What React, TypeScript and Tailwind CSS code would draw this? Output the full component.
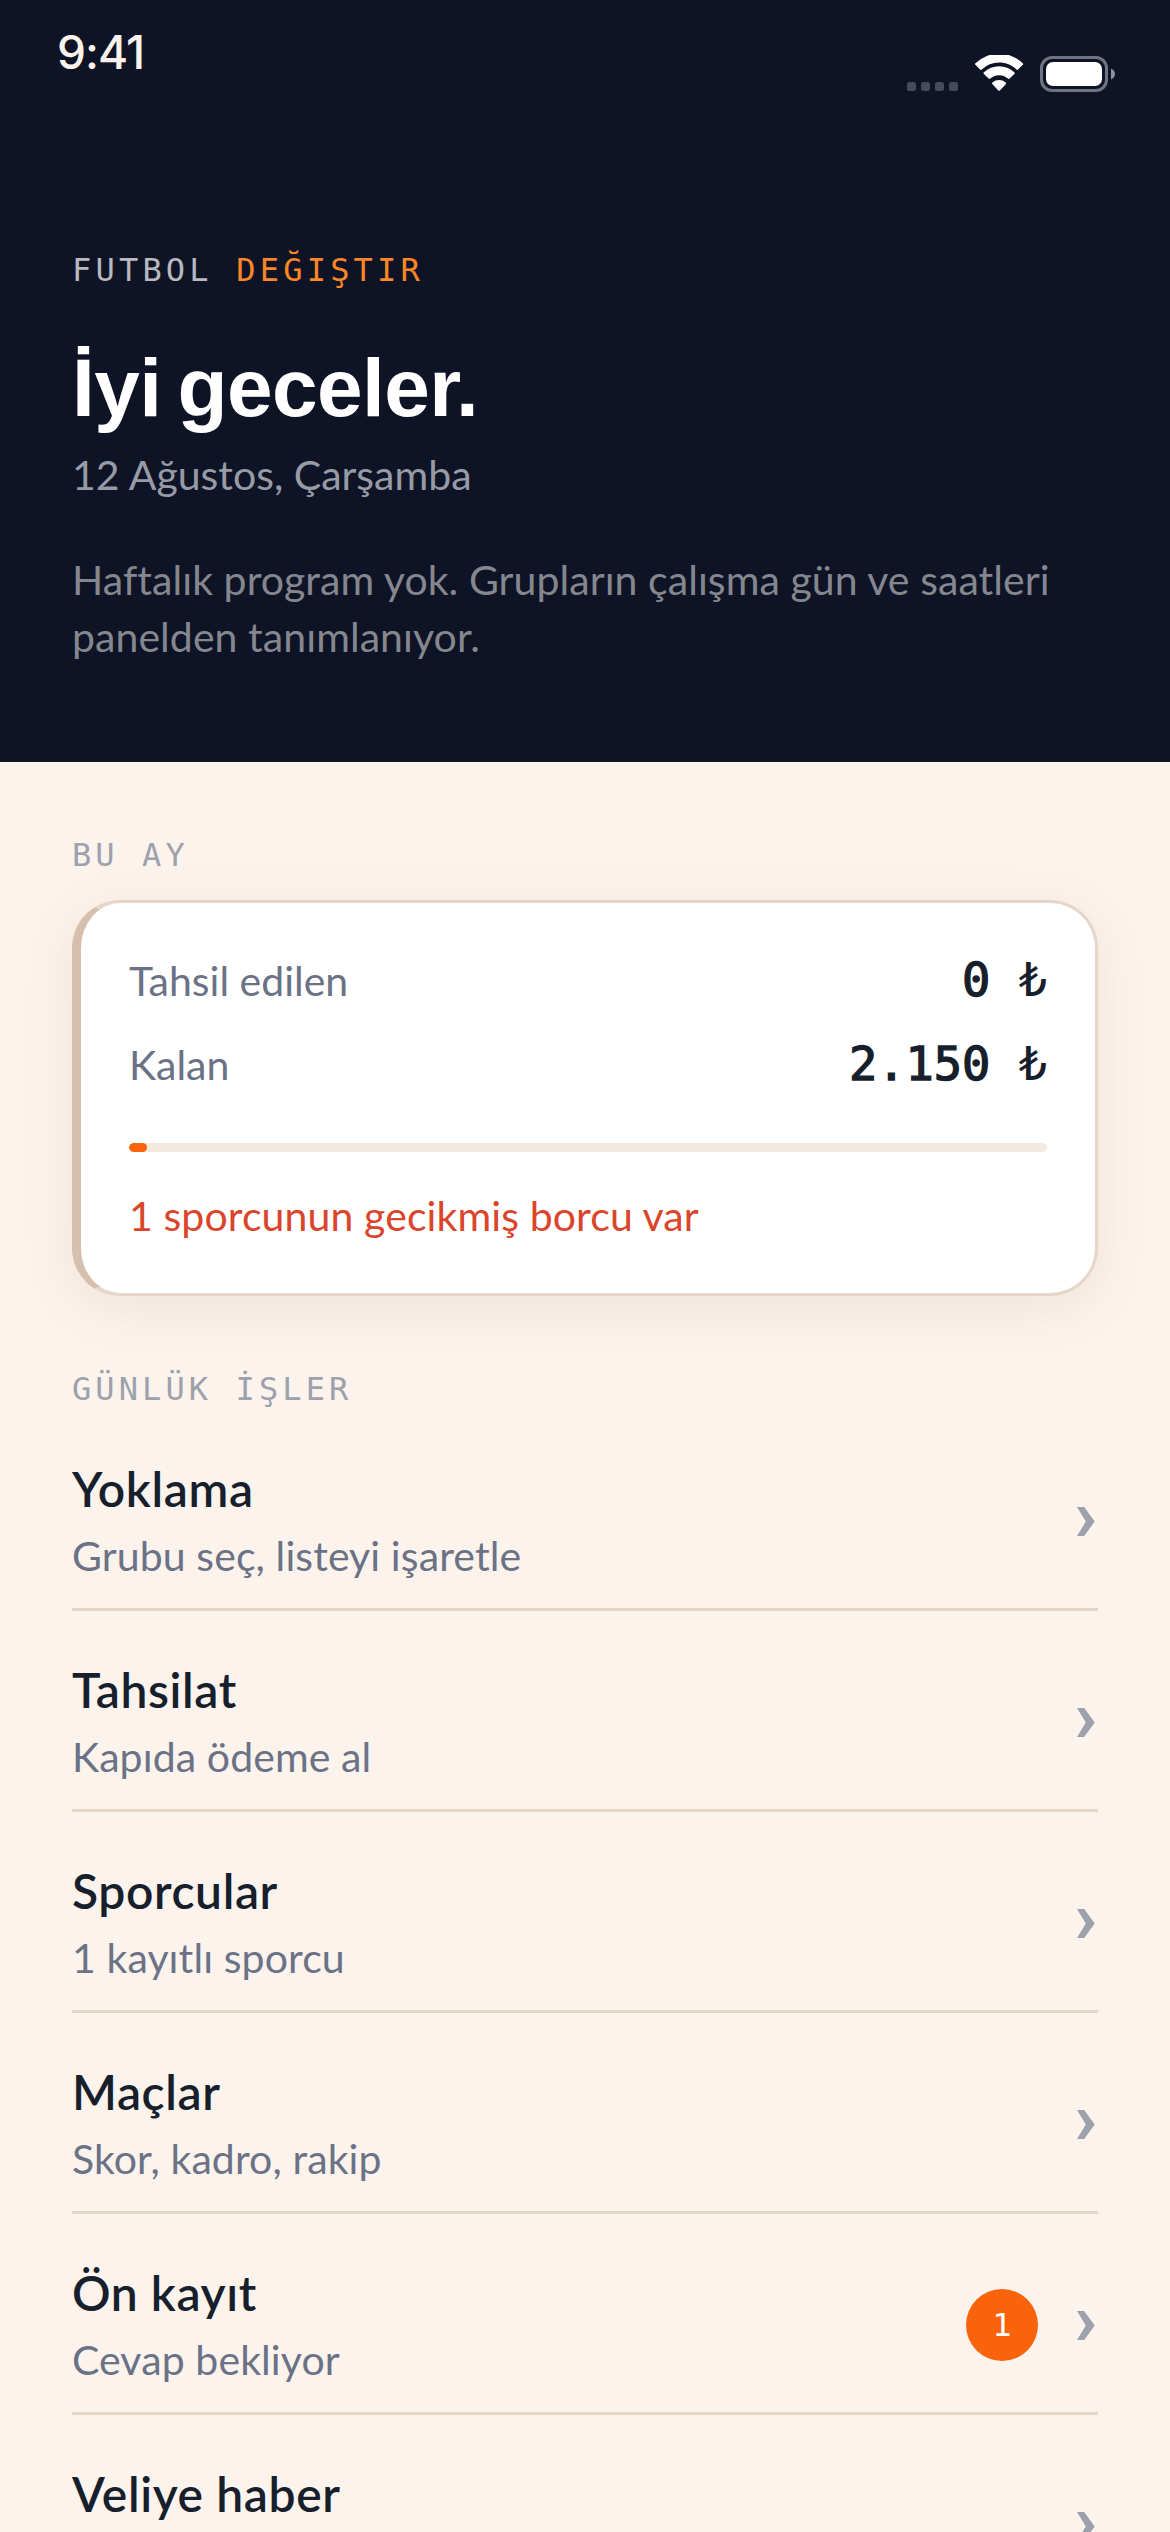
const tasks = [
  { title: 'Yoklama', detail: 'Grubu seç, listeyi işaretle' },
  { title: 'Tahsilat', detail: 'Kapıda ödeme al' },
  { title: 'Sporcular', detail: '1 kayıtlı sporcu' },
  { title: 'Maçlar', detail: 'Skor, kadro, rakip' },
  { title: 'Ön kayıt', detail: 'Cevap bekliyor', badge: 1 },
  { title: 'Veliye haber', detail: '' },
]

function StatusIcons() {
  return (
    <svg className="mt-[55px]" width="208" height="37" viewBox="0 0 208 37" fill="none">
      {/* No signal */}
      <g fill="#474b59">
        <rect x="0" y="27" width="9" height="9" rx="2.5" />
        <rect x="14" y="27" width="9" height="9" rx="2.5" />
        <rect x="28" y="27" width="9" height="9" rx="2.5" />
        <rect x="42" y="27" width="9" height="9" rx="2.5" />
      </g>
      {/* Wifi */}
      <g transform="translate(68 0)" fill="#fff">
        <path d="M24.1 7.6c6.6 0 12.7 2.5 17.3 6.9a1.2 1.2 0 0 0 1.7 0l4.700-4.700a1.100 1.100 0 0 0 0-1.600a34.300 34.300 0 0 0-47.400 0a1.100 1.100 0 0 0 0 1.600l4.700 4.700a1.200 1.200 0 0 0 1.700 0A25 25 0 0 1 24.100 7.600z" />
        <path d="M24.1 20.2c3.3 0 6.4 1.2 8.8 3.4a1.2 1.2 0 0 0 1.7 0l4.700-4.700a1.100 1.100 0 0 0 0-1.700a22.200 22.200 0 0 0-30.400 0a1.100 1.100 0 0 0 0 1.700l4.700 4.700a1.200 1.200 0 0 0 1.700 0a13 13 0 0 1 8.800-3.400z" />
        <path d="M30.7 29.2a1.1 1.1 0 0 0 0-1.7a10.3 10.3 0 0 0-13.2 0a1.1 1.1 0 0 0 0 1.7l5.800 6.200a1.100 1.100 0 0 0 1.600 0z" />
      </g>
      {/* Battery */}
      <rect x="134.5" y="2.5" width="65" height="33" rx="10.5" stroke="#6f7483" strokeWidth="3" />
      <rect x="139" y="7" width="56" height="24" rx="7" fill="#fff" />
      <path d="M204 13.5c2.500 1 4 3 4 5.500s-1.500 4.500-4 5.500z" fill="#8f919b" />
    </svg>
  )
}

function Chevron() {
  return (
    <svg className="mr-[3px]" width="18" height="29" viewBox="0 0 18 29">
      <path d="M0 0h7.200L17.700 14.500L7.200 29H0l8.800-14.500z" fill="#9ca1ab" />
    </svg>
  )
}

function SectionLabel({ children }: { children: string }) {
  return (
    <h2 className="mt-[73px] font-['DejaVu_Sans_Mono',monospace] text-[32px] leading-[40px] tracking-[4.1px] text-[#9ca1ab]">
      {children}
    </h2>
  )
}

function AmountRow({ label, amount }: { label: string; amount: string }) {
  return (
    <div className="flex h-[57px] items-baseline justify-between leading-[57px]">
      <span className="text-[#6b7286]">{label}</span>
      <span className="font-['DejaVu_Sans_Mono',monospace] text-[47px] text-[#171f2c]">
        <span className="[-webkit-text-stroke:1.4px_#171f2c]">{amount}</span> ₺
      </span>
    </div>
  )
}

export default function App() {
  return (
    <div className="h-[2532px] w-[1170px] overflow-hidden bg-[#fcf3ed] font-[Lato,sans-serif] text-[41px] leading-[57px]">
      {/* Header */}
      <header className="h-[762px] bg-[#0e1425]">
        <div className="flex h-[140px] items-start justify-between pr-[55px] pl-[57px]">
          <span className="mt-6 font-[Inter,sans-serif] text-[46px] leading-[56px] font-medium tracking-[-1px] text-[#fcf3ed]">
            9:41
          </span>
          <StatusIcons />
        </div>
        <div className="px-[72px] pt-[110px]">
          <p className="font-['DejaVu_Sans_Mono',monospace] text-[32px] leading-[40px] tracking-[4.2px] text-[#b9b9c0]">
            FUTBOL <span className="text-[#fd8626]">DEĞIŞTIR</span>
          </p>
          <h1 className="mt-[53px] font-['Liberation_Sans',sans-serif] text-[82px] leading-[90px] font-bold tracking-[-0.6px] text-white [word-spacing:-6px]">
            İyi geceler.
          </h1>
          <p className="mt-[13px] text-[#979ba6]">12 Ağustos, Çarşamba</p>
          <p className="mt-12 tracking-[0.06px] text-[#85878f]">
            Haftalık program yok. Grupların çalışma gün ve saatleri panelden tanımlanıyor.
          </p>
        </div>
      </header>

      <main className="flow-root px-[72px]">
        {/* This month */}
        <SectionLabel>BU AY</SectionLabel>
        <section className="mt-[25px] h-[396px] rounded-[48px] border-[3px] border-l-[9px] border-[#e5d6c7] border-l-[#d6c0ad] bg-white px-12 pt-12 shadow-[0_12px_54px_rgba(130,95,50,0.1)]">
          <AmountRow label="Tahsil edilen" amount="0" />
          <div className="mt-[27px]">
            <AmountRow label="Kalan" amount="2.150" />
          </div>
          <div className="mt-[51px] h-[9px] overflow-hidden rounded-full bg-[#f3e9df]">
            <div className="h-full w-[18px] rounded-full bg-[#f9630c]" />
          </div>
          <p className="mt-[35px] tracking-[0.1px] text-[#db452c]">1 sporcunun gecikmiş borcu var</p>
        </section>

        {/* Daily tasks */}
        <SectionLabel>GÜNLÜK İŞLER</SectionLabel>
        <ul className="mt-px">
          {tasks.map((task) => (
            <li key={task.title} className="flex h-[201px] items-center border-b-[3px] border-[#e5d6c7] pt-[24px]">
              <div className="flex-1">
                <h3 className="text-[48px] leading-[60px] font-semibold tracking-[0.6px] text-[#171f2c]">
                  {task.title}
                </h3>
                <p className="mt-2 h-[57px] tracking-[0.1px] text-[#6b7286]">{task.detail}</p>
              </div>
              {task.badge && (
                <span className="mr-[39px] flex size-[72px] items-center justify-center rounded-full bg-[#f9630c] font-['DejaVu_Sans_Mono',monospace] text-[32px] text-white">
                  {task.badge}
                </span>
              )}
              <Chevron />
            </li>
          ))}
        </ul>
      </main>
    </div>
  )
}
